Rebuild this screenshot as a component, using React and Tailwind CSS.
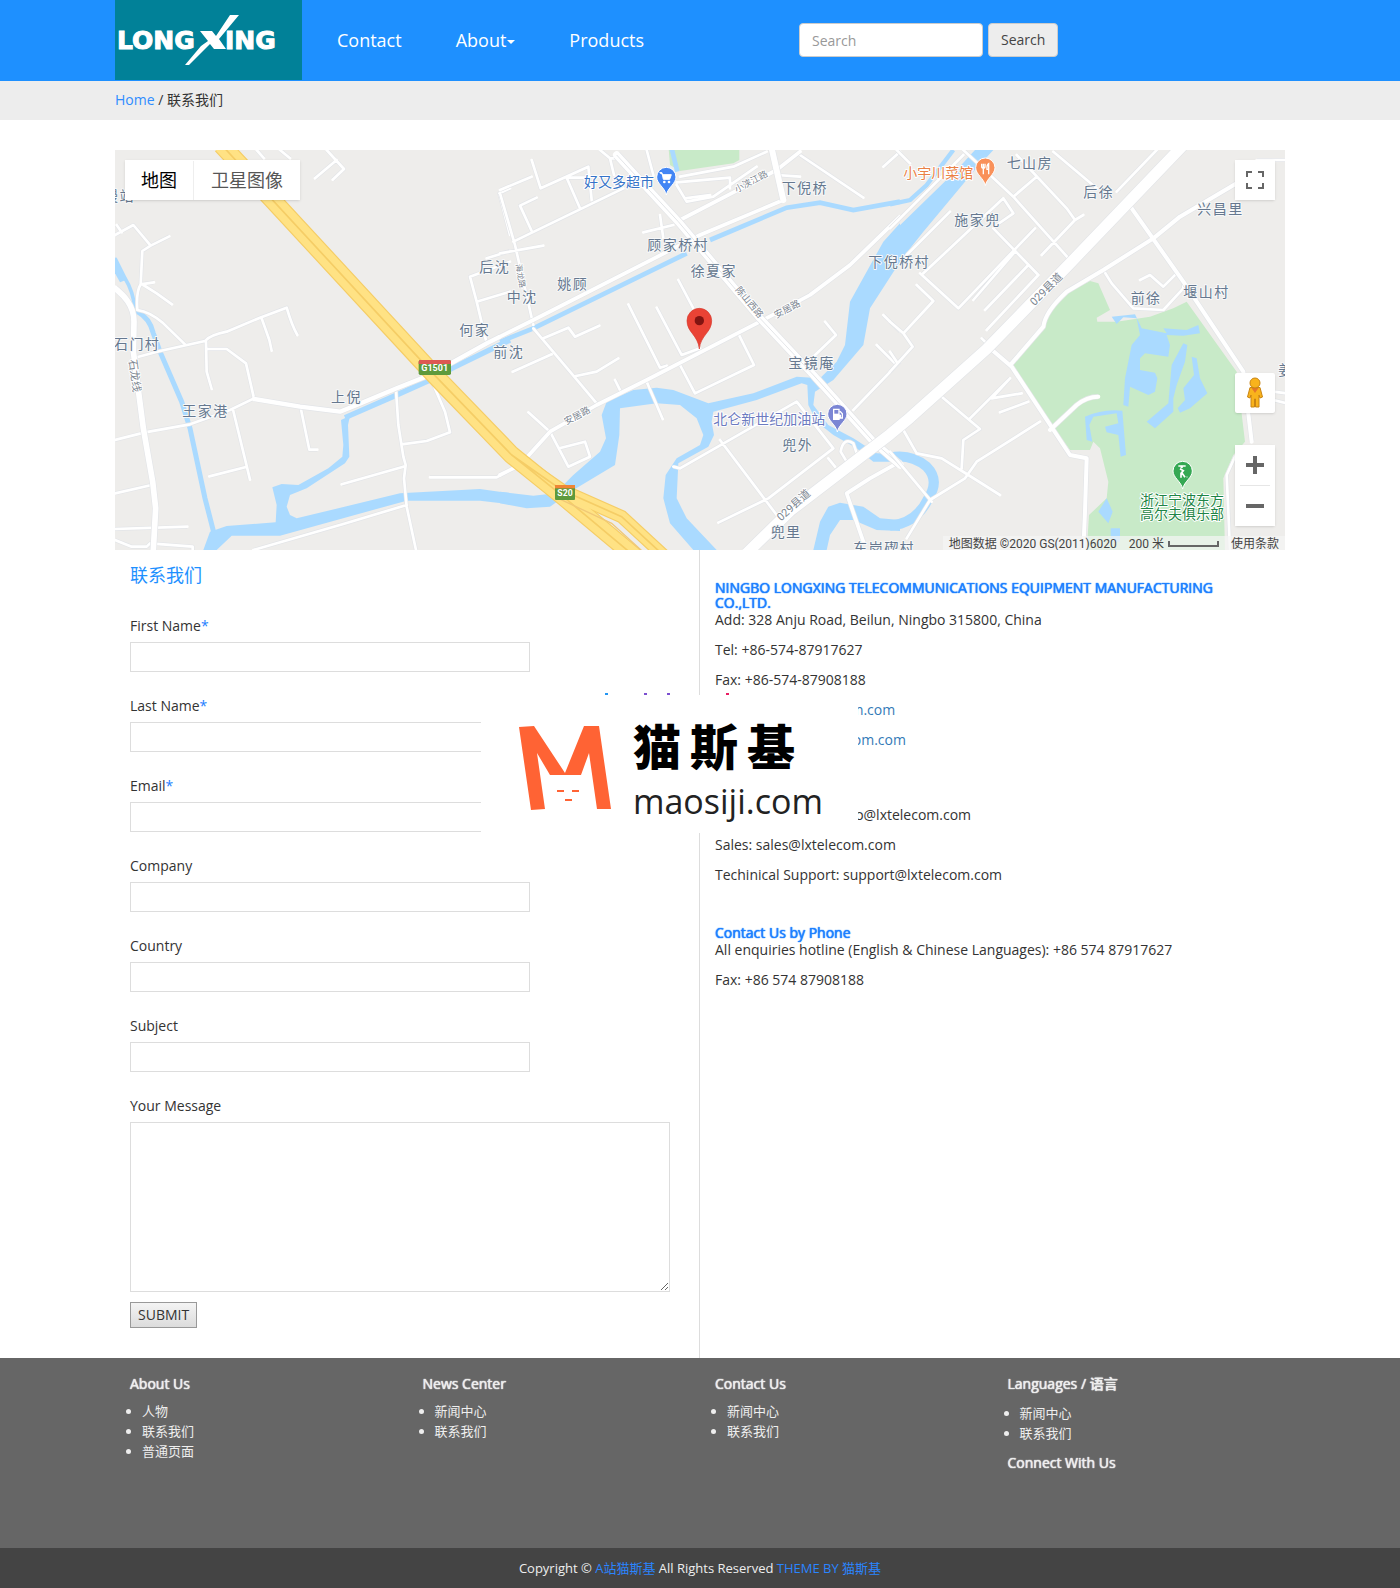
import React from "react";

const ROADS_A = [
  "M15 270L70 240L122 302L178 274M20 240L35 262M122 302L97 318L92 418Q78 440 82 495M92 418L132 412M100 420L140 445L186 478M82 495Q120 500 160 535L225 598",
  "M75 638L150 618L285 588Q300 570 350 560L450 518L530 488Q545 540 562 570M455 520L478 585L485 617",
  "M288 590L290 680L305 732M290 612L350 612L408 655L432 760L360 795L240 838L105 862L15 885",
  "M572 788L598 914L622 914M370 798L420 1004M298 994L408 966",
  "M858 735L865 840L880 935L887 960L882 1000L890 1085L918 1215M695 1018L880 965M430 1215L700 1137L890 1080",
  "M960 695L1005 800L1020 862L950 888L875 898M960 997L1160 997L1200 975",
  "M15 1152L232 1145M15 1045L125 1020M15 1185L65 1205L110 1205L120 1195L248 1205L248 1215",
  "M1130 595L1100 470L1080 395L1200 350M1100 470L1200 440M1130 340L1200 318M1200 130L1168 145L1200 270",
  "M440 15L462 40M510 15L540 40M650 15L702 72L668 104M680 45L615 100",
].join("");

const ROADS_B = [
  "M300 15L330 40L360 40M330 40L342 90M95 45L122 130L265 65L275 165M200 98L240 190M200 98L270 98M40 290L370 130M0 135L95 95M0 145L45 300L100 540M0 325L130 302",
  "M110 158L60 182L95 258M100 550L210 680L290 775M130 580L205 548L225 575L298 542M38 680L155 628M228 693L290 680L355 640M345 705L365 745",
  "M150 860L85 802M150 860L205 965L270 935L255 890L178 910",
  "M440 710L488 822M385 478L480 668L500 662M470 488L545 630L600 610M535 405L580 490M540 660L585 745L762 660L718 572",
  "M430 262L520 240M480 210L490 280M440 15L460 90M540 95L700 65L800 20",
  "M530 120L560 170L640 155L770 65M690 130L690 98L530 112M555 160L630 150",
  "M900 30L1090 158M830 90L900 95M1150 65L1200 20M975 530L1008 570L935 640M1060 795L1200 650M1130 600L1185 655M1150 510L1200 560",
  "M520 965L540 970L890 770L1000 910L805 1060L655 1133M660 885L830 1110M985 940L1005 965M1040 950L1022 920Q1030 875 1060 895L1072 930",
].join("");

const ROADS_C = [
  "M220 15L370 155L540 345M380 30L530 190L555 225L580 210M490 20L620 130M800 15L680 140M555 225L455 330M0 250L220 30M20 15L60 55",
  "M340 160L370 205L320 240M340 160L100 385M50 330L180 200M310 250L445 390M90 385L205 490L435 250M375 320L250 465M415 360L285 495M445 390L290 555M440 95L370 155",
  "M80 420L130 468L40 565L0 530M40 565L68 605L0 680M275 580L300 605M0 620L20 650",
  "M640 375L665 415L730 490L820 495L880 430L880 410M750 405L780 390L820 425L860 385",
  "M155 755L270 852L220 885L215 970M240 820L360 700M360 700L305 760L395 745M330 802L415 770",
  "M40 855L80 925L155 940L235 990L330 1050M450 830L260 950L225 1000L120 1065L50 1180M0 920L125 1070",
  "M1100 45L1185 45M1150 740L1190 745M1150 765L1190 775M1035 935L1010 990L1015 1100L1020 1215",
].join("");

const STREETS_A = "M432 762L570 785L690 800L740 780L860 730L960 690L1130 595L1200 560";
const STREETS_B = "M0 575L100 525L600 270L850 165M540 225L830 75L900 20M0 990L60 960L150 860L290 780L440 705L780 530L930 450L1050 360L1200 215M1200 950L1110 1000L1040 1045L1090 1190";
const STREETS_C = "M725 190L880 410L1060 680L1085 890M365 655L460 545Q465 500 530 440L640 375L790 280L870 215L1040 115M300 610L365 665L540 930L590 940L585 1100L580 1215M480 855L560 780Q590 755 625 755";

const SHIFT_A = "translate(-15 -15)";
const SHIFT_B = "translate(1155 -15)";
const SHIFT_C = "translate(2325 -15)";

function Road({ d, width }) {
  return (
    <g fill="none" strokeLinejoin="round">
      <path d={d} stroke="#e3e5e8" strokeWidth={width + 4} />
      <path d={d} stroke="#fff" strokeWidth={width} strokeLinecap="round" />
    </g>
  );
}

function Place({ x, y, children, fill = "#66788f" }) {
  return (
    <text x={x} y={y + 15} fontSize="42" fill={fill} stroke="#f7f8f9" strokeWidth="6" strokeLinejoin="round" className="tracking-widest [paint-order:stroke]">
      {children}
    </text>
  );
}

function Poi({ x, y, children, fill }) {
  return (
    <text x={x} y={y + 15} fontSize="42" fill={fill} stroke="#fff" strokeWidth="6" strokeLinejoin="round" className="[paint-order:stroke]">
      {children}
    </text>
  );
}

function Street({ x, y, turn, children, size = 33 }) {
  return (
    <text transform={`translate(${x} ${y}) rotate(${turn})`} y="12" textAnchor="middle" fontSize={size} fill="#7d8691" stroke="#fff" strokeWidth="5" className="[paint-order:stroke]">
      {children}
    </text>
  );
}

function Pin({ x, y, fill, children }) {
  return (
    <g transform={`translate(${x} ${y})`}>
      <path d="M0 52C-4 30-29 18-29 -2A29 29 0 0 1 29 -2C29 18 4 30 0 52Z" fill={fill} stroke="#fff" strokeWidth="3" />
      {children}
    </g>
  );
}

function MapDrawing() {
  return (
    <svg viewBox="0 0 3510 1200" preserveAspectRatio="xMidYMid slice" className="block h-full w-full" role="img" aria-label="地图">
      <rect width="3510" height="1200" fill="#eeedeb" />

      <g fill="#c8eac8">
        <path transform={SHIFT_B} d="M505 0H718V45L700 55L540 78L510 60Z" />
        <path transform={SHIFT_C} d="M370 660L460 550L470 510L540 440L600 408L625 415L660 495L620 518L622 530L680 530L780 515L850 490L890 470L1040 680L1065 890L1030 930L1000 1000L1005 1220H590L597 1110L650 1060L655 1010L630 910L610 890L600 915L540 915L485 840Z" />
      </g>

      <g fill="#aadaff" stroke="none">
        <g transform={SHIFT_A}>
          <path d="M15 340L45 400Q70 440 74 490" fill="none" stroke="#aadaff" strokeWidth="11" />
          <path d="M15 335L48 405L30 412L15 385Z" />
          <path d="M80 498Q120 520 130 565L150 620L215 770L240 850L285 1060L312 1165" fill="none" stroke="#aadaff" strokeWidth="15" />
          <path d="M705 818L860 750L960 705L1030 668L1200 585" fill="none" stroke="#aadaff" strokeWidth="16" />
          <path d="M487 1027L515 1017L565 1020L655 970L697 935L700 900L693 825L720 812L714 840L718 935L705 955L590 1030L540 1050L530 1085L540 1110L560 1120L870 1045L1110 1032L1200 1045L1200 1078L1110 1067L890 1067L510 1172L365 1172L320 1215H280L300 1160L350 1143L497 1132L500 1080Z" />
        </g>
        <g transform={SHIFT_B}>
          <path d="M0 1040L100 1052L165 1045L220 990L300 920L318 880L305 810L320 770L400 735L470 728L520 735L625 775L760 745L890 695L960 700L1010 650L1035 600L1050 470L1150 290L1200 235V350L1110 490L1090 600L1000 705L945 740L940 780L985 840L1060 880L1130 925L1200 928V950H1120L1070 910L1000 870L950 830L925 780L922 720L905 715L770 765L640 800L635 830L642 870L625 905L535 955L530 1060L560 1120L650 1215H580L510 1135L490 1060L497 990L530 940L600 900L610 870L590 820L540 780L470 775L360 790L358 870L345 960L220 1035L150 1085L80 1090L0 1075Z" />
          <path d="M0 590L100 550L560 325M630 285L860 188L960 173L1060 195L1200 170M515 10L532 80" fill="none" stroke="#aadaff" strokeWidth="14" />
          <path d="M940 1215L960 1130L985 1085L1020 1073L1090 1085L1140 1120L1200 1125V1158L1130 1155L1060 1125L1020 1125L990 1170L980 1215Z" />
        </g>
        <g transform={SHIFT_C}>
          <path d="M0 270L200 75L255 15H310L250 80L100 260L30 348L0 385Z" />
          <path d="M0 178L60 165L110 120L190 15" fill="none" stroke="#aadaff" strokeWidth="13" />
          <path d="M0 938Q60 925 110 965Q150 1005 115 1060Q80 1135 0 1142" fill="none" stroke="#aadaff" strokeWidth="30" />
          <path d="M665 515L735 508L755 550L830 565L820 550L890 555L925 540L930 565L880 572L830 570L840 600L835 635L765 625L750 640V675L795 683L802 700L795 740L775 750L720 725L715 785L700 780L705 700L725 600L750 570L740 520L700 517L680 537Z" />
          <path d="M880 595L892 600L885 650L860 720L850 760V800L795 850L770 830L835 775L845 660Z" />
          <path d="M905 635L920 640L930 700L952 745L900 790L870 803L863 790L885 765L880 730L912 690Z" />
          <path d="M585 815Q640 790 697 797L708 930L692 935L685 870L650 862L645 845L685 835L680 805L610 815L598 840L607 890L590 885Z" />
          <path d="M625 1100L650 1060L668 1100L655 1135ZM662 1150H690V1190H662Z" />
        </g>
      </g>

      <g transform={SHIFT_A}>
        <Road d={ROADS_A} width={8} />
        <Road d={STREETS_A} width={13} />
        <Road d="M15 430C40 450 72 480 72 530L70 620L100 850L128 1010L137 1090L130 1215" width={17} />
      </g>
      <g transform={SHIFT_B}>
        <Road d={ROADS_B} width={8} />
        <Road d={STREETS_B} width={11} />
        <Road d="M850 165L815 10" width={18} />
        <Road d="M350 30L535 230L780 520L940 690L1120 890L1200 960" width={22} />
        <path d="M350 30L535 230L780 520L940 690L1120 890L1200 960" fill="none" stroke="#e3e5e8" strokeWidth="3" />
      </g>
      <g transform={SHIFT_C}>
        <Road d={ROADS_C} width={8} />
        <Road d={STREETS_C} width={12} />
        <Road d="M-430 1225L-300 1098L0 868L60 818L290 612L540 355L880 0" width={33} />
      </g>

      <g fill="none">
        <path d="M320 -15L960 677L1190 915L1345 1040L1560 1220" stroke="#f5cd66" strokeWidth="55" />
        <path d="M1190 915L1340 1020L1520 1100L1650 1220" stroke="#f5cd66" strokeWidth="40" />
        <path d="M320 -15L960 677L1190 915L1345 1040L1560 1220" stroke="#ffe284" strokeWidth="48" />
        <path d="M1190 915L1340 1020L1520 1100L1650 1220" stroke="#ffe284" strokeWidth="33" />
        <path d="M320 -15L960 677L1190 915L1345 1040L1560 1220M1190 915L1340 1020L1520 1100L1650 1220" stroke="#f5cd66" strokeWidth="5" />
        <path d="M1330 1045L1490 1120L1600 1220" stroke="#f0c877" strokeWidth="4" />
      </g>

      <g transform={SHIFT_A}>
        <rect x="926" y="645" width="97" height="45" rx="5" fill="#5e9a3c" />
        <path d="M926 657V650Q926 645 931 645H1018Q1023 645 1023 650V657Z" fill="#dd5852" />
        <text x="974" y="679" textAnchor="middle" fontSize="27" fontWeight="700" fill="#fff">G1501</text>
        <Place x={-18} y={152}>慢站</Place>
        <Place x={12} y={597}>石门村</Place>
        <Street x={75} y={692} turn={82}>石龙线</Street>
        <Place x={217} y={798}>王家港</Place>
        <Place x={663} y={757}>上倪</Place>
        <Place x={1048} y={555}>何家</Place>
        <Place x={1150} y={620}>前沈</Place>
        <Place x={1108} y={367}>后沈</Place>
      </g>
      <g transform={SHIFT_B}>
        <rect x="165" y="1020" width="60" height="45" rx="3" fill="#5e9a3c" />
        <rect x="165" y="1020" width="60" height="10" fill="#ef8535" />
        <text x="195" y="1054" textAnchor="middle" fontSize="26" fontWeight="700" fill="#fff">S20</text>
        <Place x={20} y={457}>中沈</Place>
        <Place x={172} y={417}>姚顾</Place>
        <Street x={65} y={392} turn={80} size={24}>海龙路</Street>
        <Place x={442} y={300}>顾家桥村</Place>
        <Place x={572} y={378}>徐夏家</Place>
        <Street x={750} y={470} turn={50} size={28}>陈山西路</Street>
        <Street x={860} y={490} turn={-28} size={28}>安居路</Street>
        <Street x={230} y={810} turn={-28} size={28}>安居路</Street>
        <Street x={752} y={107} turn={-28} size={27}>小浃江路</Street>
        <Place x={845} y={130}>下倪桥</Place>
        <Place x={1105} y={352}>下倪桥村</Place>
        <Place x={865} y={655}>宝镜庵</Place>
        <Place x={847} y={900}>兜外</Place>
        <Place x={812} y={1160}>兜里</Place>
        <Street x={880} y={1080} turn={-42}>029县道</Street>
        <Place x={1060} y={1208}>东岗碶村</Place>
        <Poi x={640} y={822} fill="#6d7bc0">北仑新世纪加油站</Poi>
        <Poi x={252} y={110} fill="#3573c8">好又多超市</Poi>
        <Pin x={499} y={98} fill="#4285f4">
          <path d="M-20 -15H-13L-9 5H10L15 -9H-10Z" fill="#fff" stroke="#fff" strokeWidth="3" />
          <circle cx="-6" cy="13" r="4" fill="#fff" />
          <circle cx="8" cy="13" r="4" fill="#fff" />
        </Pin>
        <Pin x={1012} y={809} fill="#7b86d4">
          <path d="M-11 -16H5V14H-11ZM8 -10L15 -3V10H9V2H5" fill="none" stroke="#fff" strokeWidth="4" />
          <path d="M-11 -3H5V14H-11Z" fill="#fff" />
        </Pin>
        <g>
          <path d="M598 612C594 570 561 562 561 527A37 37 0 0 1 635 527C635 562 602 570 598 612Z" fill="#ea4335" stroke="#d63a2d" strokeWidth="2" />
          <circle cx="598" cy="527" r="14" fill="#811411" />
        </g>
      </g>
      <g transform={SHIFT_C}>
        <Poi x={40} y={84} fill="#ea8146">小宇川菜馆</Poi>
        <Pin x={286} y={70} fill="#f9915a">
          <path d="M-11 -14V-6Q-11 0 -6 0V18M-1 -14V-6Q-1 0 -6 0M-6 -14V0M10 18V-14Q4 -10 5 3H10" fill="none" stroke="#fff" strokeWidth="4" />
        </Pin>
        <Place x={350} y={55}>七山房</Place>
        <Place x={580} y={142}>后徐</Place>
        <Place x={922} y={192}>兴昌里</Place>
        <Place x={193} y={225}>施家兜</Place>
        <Street x={468} y={432} turn={-45}>029县道</Street>
        <Place x={722} y={460}>前徐</Place>
        <Place x={880} y={442}>堰山村</Place>
        <Place x={1165} y={675}>姜</Place>
        <Pin x={878} y={980} fill="#35a853">
          <circle cx="-3" cy="-14" r="4" fill="#fff" />
          <path d="M-13 -17H9M-8 -9L2 -3L-5 5V18M-2 4L7 17M12 16h2" fill="none" stroke="#fff" strokeWidth="5" />
        </Pin>
        <Poi x={750} y={1066} fill="#1e8546">浙江宁波东方</Poi>
        <Poi x={750} y={1108} fill="#1e8546">高尔夫俱乐部</Poi>
      </g>
    </svg>
  );
}

const MAP_BUTTON = "flex w-10 items-center justify-center bg-white";

function ContactMap() {
  return (
    <section className="relative h-[400px] overflow-hidden font-['Roboto','Noto_Sans_CJK_SC',sans-serif]">
      <MapDrawing />
      <div className="absolute left-2.5 top-2.5 flex h-10 bg-white pt-px text-lg shadow">
        <button type="button" className="border-r border-[#eee] px-4 text-black">地图</button>
        <button type="button" className="px-[17px] text-[#565656]">卫星图像</button>
      </div>
      <div className="absolute right-2.5 top-2.5 rounded-xs shadow">
        <button type="button" aria-label="全屏" className={`${MAP_BUTTON} h-10`}>
          <svg width="18" height="18" viewBox="0 0 18 18" fill="none" stroke="#666" strokeWidth="2">
            <path d="M1 6V1H6M12 1H17V6M17 12V17H12M6 17H1V12" />
          </svg>
        </button>
      </div>
      <div className="absolute bottom-6 right-2.5 flex flex-col gap-8">
        <button type="button" aria-label="街景小人" className={`${MAP_BUTTON} h-10 rounded-xs shadow`}>
          <svg width="18" height="32" viewBox="0 0 18 32">
            <path d="M4 10.500H14L16.500 20L14 21L13 18V30H9.500V22H8.500V30H5V18L4 21L1.500 20Z" fill="#f9b31c" stroke="#c98413" strokeWidth="1" />
            <path d="M5.500 11H12.500L9 16Z" fill="#e5772b" />
            <circle cx="9" cy="6" r="5" fill="#f9b31c" stroke="#c98413" strokeWidth="1" />
          </svg>
        </button>
        <div className="flex flex-col rounded-xs bg-white shadow">
          <button type="button" aria-label="放大" className={`${MAP_BUTTON} h-10`}>
            <svg width="18" height="18" viewBox="0 0 18 18" fill="none" stroke="#666" strokeWidth="4"><path d="M0 9H18M9 0V18" /></svg>
          </button>
          <div className="mx-[5px] h-px bg-[#e6e6e6]" />
          <button type="button" aria-label="缩小" className={`${MAP_BUTTON} h-10`}>
            <svg width="18" height="18" viewBox="0 0 18 18" fill="none" stroke="#666" strokeWidth="4"><path d="M0 9H18" /></svg>
          </button>
        </div>
      </div>
      <div className="absolute bottom-0 right-0 flex h-3.5 items-center gap-3 bg-[#f5f5f5]/70 px-1.5 pt-px text-xs leading-none text-[#444]">
        <span>地图数据 ©2020 GS(2011)6020</span>
        <span className="flex items-center gap-1">
          200 米
          <span className="h-1.5 w-[51px] border-2 border-t-0 border-[#666]" />
        </span>
        <a href="#terms">使用条款</a>
      </div>
    </section>
  );
}

function Logo() {
  return (
    <svg viewBox="0 0 187 80" className="h-20 w-[187px] bg-[#018198]" role="img" aria-label="LONGXING" fill="#fff">
      <g fontSize="25" fontWeight="700" fontFamily="DejaVu Sans" stroke="#fff" strokeWidth="1">
        <text x="2" y="49">LONG</text>
        <text x="110" y="49">ING</text>
      </g>
      <path d="M85 31H97L101 36L115 15H124L104 39L111 49H99L95 44L74 65H70L86 46L93 41Z" />
    </svg>
  );
}

function Header() {
  const link = "text-lg text-white";
  return (
    <header className="bg-[#1e90ff]">
      <div className="mx-auto flex h-[81px] max-w-[1170px] items-start">
        <a href="#home" className="shrink-0"><Logo /></a>
        <nav className="flex h-20 w-[497px] items-center gap-[54px] pl-[35px]">
          <a href="#contact" className={link}>Contact</a>
          <a href="#about" className={`${link} flex items-center gap-px`}>
            About
            <svg width="8" height="4" viewBox="0 0 8 4" fill="#fff" className="mt-1"><path d="M0 0H8L4 4Z" /></svg>
          </a>
          <a href="#products" className={link}>Products</a>
        </nav>
        <form className="flex h-20 items-center gap-[5px]" onSubmit={(e) => e.preventDefault()}>
          <input type="search" aria-label="Search" placeholder="Search" className="h-[34px] w-[184px] rounded border border-[#ccc] bg-white px-3 text-sm placeholder:text-[#999]" />
          <button type="submit" className="h-[34px] rounded border border-[#ccc] bg-[#ededed] px-3 text-sm text-[#444]">Search</button>
        </form>
      </div>
    </header>
  );
}

function Field({ id, label, required }) {
  return (
    <div className="mb-6">
      <label htmlFor={id} className="block h-5 text-sm leading-5">
        {label}
        {required && <span className="text-[#1e80ff]">*</span>}
      </label>
      <input id={id} type="text" className="mt-1.5 block h-[30px] w-full max-w-[400px] border border-[#ddd] px-2 text-sm" />
    </div>
  );
}

function ContactForm() {
  return (
    <form className="px-[15px] pb-[30px]" onSubmit={(e) => e.preventDefault()}>
      <h1 className="mb-[27px] pt-[11px] text-lg leading-7 text-[#1e90ff]">联系我们</h1>
      <Field id="first" label="First Name" required />
      <Field id="last" label="Last Name" required />
      <Field id="email" label="Email" required />
      <Field id="company" label="Company" />
      <Field id="country" label="Country" />
      <Field id="subject" label="Subject" />
      <label htmlFor="message" className="block h-5 text-sm leading-5">Your Message</label>
      <div className="mt-1.5 pr-[15px]">
        <textarea id="message" className="block h-[170px] w-full resize border border-[#ddd] p-2 text-sm" />
      </div>
      <button type="submit" className="mt-2.5 h-[26px] border border-[#999] bg-linear-to-b from-[#f4f4f4] to-[#dcdcdc] px-[7px] text-sm leading-none">SUBMIT</button>
    </form>
  );
}

const HEAVY = "[text-shadow:0_0_1px_currentColor,0_0_1px_currentColor]";

function ContactInfo() {
  const title = `text-sm font-medium leading-[15px] text-[#1e80ff] ${HEAVY}`;
  const list = "flex flex-col gap-2.5 text-sm leading-5";
  return (
    <div className="-ml-px border-l border-[#ddd] px-[15px] pt-[30px]">
      <h2 className={title}>NINGBO LONGXING TELECOMMUNICATIONS EQUIPMENT MANUFACTURING CO.,LTD.</h2>
      <div className={list}>
        <p>Add: 328 Anju Road, Beilun, Ningbo 315800, China</p>
        <p>Tel: +86-574-87917627</p>
        <p>Fax: +86-574-87908188</p>
        <p>E-mail: <a href="#mail" className="text-[#337ab7]">info@lxtelecom.com</a></p>
        <p>Website: <a href="#site" className="text-[#337ab7]">www.lxtelecom.com</a></p>
      </div>
      <div className={`mt-[55px] ${list}`}>
        <p>General Enquiries: info@lxtelecom.com</p>
        <p>Sales: sales@lxtelecom.com</p>
        <p>Techinical Support: support@lxtelecom.com</p>
      </div>
      <h2 className={`mt-10 ${title}`}>Contact Us by Phone</h2>
      <div className={list}>
        <p>All enquiries hotline (English &amp; Chinese Languages): +86 574 87917627</p>
        <p>Fax: +86 574 87908188</p>
      </div>
    </div>
  );
}

function BrandCard() {
  return (
    <div className="absolute left-1/2 top-[143px] ml-[-219px]">
      <div className="flex h-[2px] gap-[20px] pl-[124px]">
        <span className="mr-[16px] w-[3px] bg-[#2196f3]" />
        <span className="w-[3px] bg-[#7b4fd0]" />
        <span className="mr-[36px] w-[3px] bg-[#7b4fd0]" />
        <span className="w-[3px] bg-[#e91e63]" />
      </div>
      <div className="flex h-[138px] w-[377px] items-start gap-[22px] bg-white pl-[38px] pt-[22px]">
        <svg width="92" height="84" viewBox="0 0 92 84" fill="#ff6334" aria-hidden="true" className="mt-[9px]">
          <path d="M0 1L15 0L46 47L65 0H80L92 83H78L70 27L62 49H31L18 27L26 83L12 84Z" />
          <path d="M38 64H45V66H38ZM53 64H60V66H53ZM46 73H53V75H46Z" />
        </svg>
        <div className="text-black">
          <div className="flex gap-[9px] font-['Noto_Sans_CJK_SC',sans-serif] text-[48px] font-black leading-[54px]">
            <span>猫</span><span>斯</span><span>基</span>
          </div>
          <div className="mt-[7px] text-[34px] leading-[46px] text-[#222]">maosiji.com</div>
        </div>
      </div>
    </div>
  );
}

function FooterList({ items }) {
  return (
    <ul className="list-disc pl-3 text-[13px] leading-5">
      {items.map((item) => (
        <li key={item}><a href="#page">{item}</a></li>
      ))}
    </ul>
  );
}

function Footer() {
  const title = `text-sm font-medium leading-5 ${HEAVY}`;
  return (
    <footer className="text-[#eee]">
      <div className="bg-[#666]">
        <div className="mx-auto grid min-h-[190px] max-w-[1170px] grid-cols-4 pt-4">
          <div className="px-[15px]">
            <h3 className={`mb-[7px] ${title}`}>About Us</h3>
            <FooterList items={["人物", "联系我们", "普通页面"]} />
          </div>
          <div className="px-[15px]">
            <h3 className={`mb-[7px] ${title}`}>News Center</h3>
            <FooterList items={["新闻中心", "联系我们"]} />
          </div>
          <div className="px-[15px]">
            <h3 className={`mb-[7px] ${title}`}>Contact Us</h3>
            <FooterList items={["新闻中心", "联系我们"]} />
          </div>
          <div className="px-[15px]">
            <h3 className={`mb-[9px] ${title}`}>Languages / 语言</h3>
            <FooterList items={["新闻中心", "联系我们"]} />
            <h3 className={`mt-2.5 ${title}`}>Connect With Us</h3>
          </div>
        </div>
      </div>
      <p className="bg-[#444] py-2.5 text-center text-[13px] leading-5">
        Copyright © <a href="#site" className="text-[#2a85ff]">A站猫斯基</a> All Rights Reserved{" "}
        <a href="#theme" className="text-[#2a85ff]">THEME BY 猫斯基</a>
      </p>
    </footer>
  );
}

export default function App() {
  return (
    <div className="min-h-screen bg-white font-['Open_Sans','Noto_Sans_CJK_SC',sans-serif] text-[#333]">
      <Header />
      <div className="bg-[#ededed]">
        <p className="mx-auto max-w-[1170px] pb-[10px] pt-[9px] text-sm leading-5">
          <a href="#home" className="text-[#2f8cff]">Home</a> / 联系我们
        </p>
      </div>
      <main className="mx-auto max-w-[1170px] pt-[30px]">
        <ContactMap />
        <div className="relative grid grid-cols-2">
          <ContactForm />
          <ContactInfo />
          <BrandCard />
        </div>
      </main>
      <Footer />
    </div>
  );
}
